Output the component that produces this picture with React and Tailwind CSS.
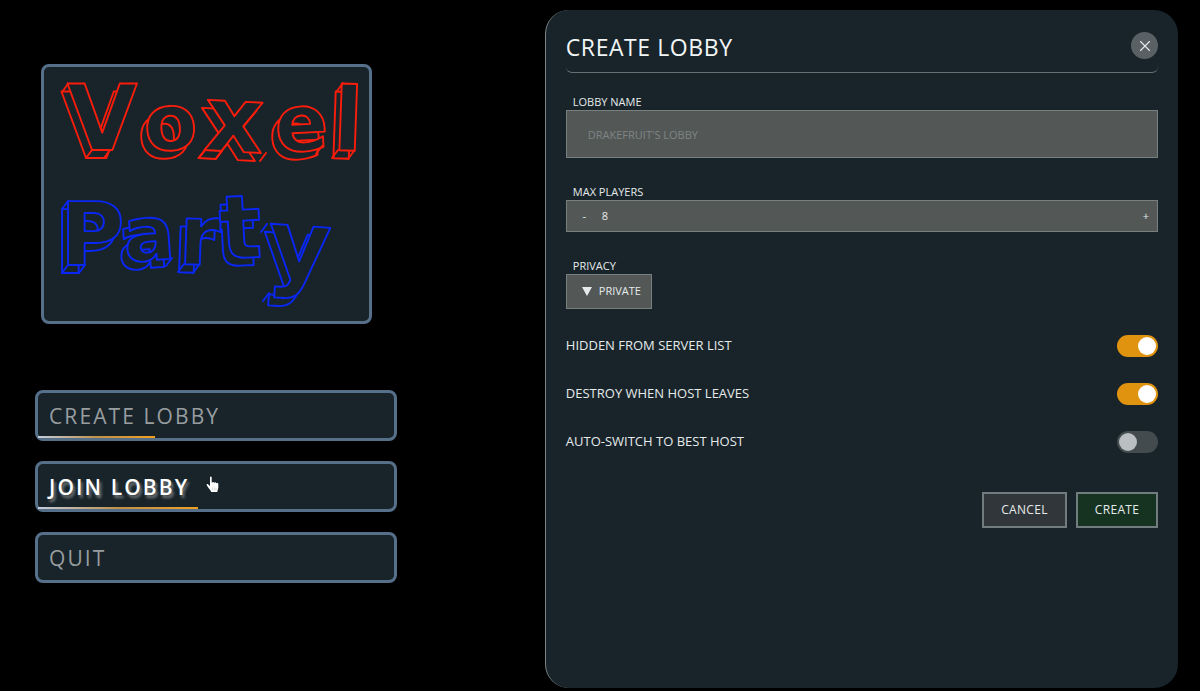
import { useState } from 'react';
import { FiX } from 'react-icons/fi';

const menuItems = [
  { label: 'CREATE LOBBY', progress: 33 },
  { label: 'JOIN LOBBY', progress: 45, active: true },
  { label: 'QUIT', progress: 0 },
];

const Logo = () => (
  <div className="w-[331px] rounded-lg border-[3px] border-[#56708a] bg-[#18242a]">
    <svg viewBox="44 67 325 254" className="block w-full" role="img" aria-label="Voxel Party">
      <g
        fontFamily="'DejaVu Sans', sans-serif"
        fontWeight="700"
        fill="#18242a"
        strokeWidth="1.9"
        strokeLinejoin="round"
        strokeLinecap="round"
      >
        <g stroke="#fb1d0c">
          <use href="#logo-top" x="-6" y="8" />
          <text id="logo-top">
            <tspan x="67" y="150" fontSize="91">V</tspan>
            <tspan x="145" y="151" fontSize="78" rotate="-3">o</tspan>
            <tspan x="203" y="150" fontSize="92" rotate="3">x</tspan>
            <tspan x="276" y="152" fontSize="79" rotate="-3">e</tspan>
            <tspan x="332" y="150" fontSize="88" rotate="2">l</tspan>
          </text>
          {/* edges that join the front face to the back one */}
          <path d="M68 84l-6 8M92 150l-6 8M110 150l-6 8M205 150l-6 8M222 151l-6 8M266 153l-6 8M322 146l-6 8M343 83l-6 8M338 150l-6 8M354 151l-6 8" />
        </g>
        <g stroke="#0a27f5">
          <use href="#logo-bottom" x="-6" y="8" />
          <text id="logo-bottom">
            <tspan x="60" y="265" fontSize="88">P</tspan>
            <tspan x="125" y="262" fontSize="76" rotate="-4">a</tspan>
            <tspan x="178" y="264" fontSize="84" rotate="2">r</tspan>
            <tspan x="221" y="259" fontSize="88" rotate="-3">t</tspan>
            <tspan x="266" y="276" fontSize="96" rotate="4">y</tspan>
          </text>
          <path d="M68 201l-6 8M68 265l-6 8M85 265l-6 8M172 258l-6 8M184 264l-6 8M199 265l-6 8M267 224l-6 8M269 293l-6 8" />
        </g>
      </g>
    </svg>
  </div>
);

const HandCursor = () => (
  <svg viewBox="0 0 13 18" className="absolute left-[168px] top-3 h-[18px] w-[13px]" aria-hidden="true">
    <path
      d="M4 1.4C4 .3 5.7.3 5.7 1.4v5l.5.1c.2-.9 1.7-.8 1.8.2l.4.1c.3-.8 1.7-.6 1.8.3l.4.1c.5-.6 1.7-.3 1.7.7v3.6c0 1.6-.8 2.4-1 4.6H5.2c-.3-1.7-1.8-3-3-4.7L.8 9.3c-.5-.9.6-1.7 1.4-.9L4 10z"
      fill="#fff"
    />
    <path d="M6.6 11.5v3M8.4 11.5v3M10 11.5v3" stroke="#a3abae" strokeWidth=".4" />
  </svg>
);

const MenuButton = ({ label, progress, active }) => (
  <button
    type="button"
    className={`relative flex h-[51px] w-full items-center rounded-lg border-[3px] border-[#56708a] bg-[#18242a] px-[11px] pt-[2px] text-left text-[21px] tracking-widest ${
      active
        ? 'font-semibold text-white [text-shadow:2px_3px_3px_#7a7d7f]'
        : 'font-medium text-[#989da0]'
    }`}
  >
    {label}
    {progress > 0 && (
      <span
        className="absolute bottom-0 left-0 h-[2px] bg-linear-to-r from-[#c3ccdc] via-[#c09147] to-[#f0a01c]"
        style={{ width: `${progress}%` }}
      />
    )}
    {active && <HandCursor />}
  </button>
);

const Toggle = ({ id, label, checked, onChange }) => (
  <div className="flex h-[22px] items-center justify-between">
    <label htmlFor={id} className="text-[13px]">{label}</label>
    <input
      id={id}
      type="checkbox"
      role="switch"
      checked={checked}
      onChange={onChange}
      className="h-[22px] w-[41px] appearance-none rounded-full bg-[#434b4e] p-[2px] before:block before:size-[18px] before:rounded-full before:bg-[#babfc1] checked:bg-[#e0930f] checked:before:ml-auto checked:before:bg-white"
    />
  </div>
);

const App = () => {
  const [name, setName] = useState('');
  const [players, setPlayers] = useState(8);
  const [privacy, setPrivacy] = useState('PRIVATE');
  const [options, setOptions] = useState({ hidden: true, destroy: true, autoSwitch: false });

  const toggle = (key) => setOptions({ ...options, [key]: !options[key] });

  return (
    <div className="flex min-h-screen bg-black font-['Open_Sans',sans-serif] text-[#e6eaeb]">
      <nav className="w-[45.4%] shrink-0 px-[35px] pt-16">
        <div className="pl-[6px]">
          <Logo />
        </div>
        <div className="mt-[66px] flex max-w-[362px] flex-col gap-5">
          {menuItems.map((item) => (
            <MenuButton key={item.label} {...item} />
          ))}
        </div>
      </nav>

      <main className="mt-[10px] mr-[22px] mb-[3px] flex-1 rounded-3xl border-l border-[#7d8586] bg-[#18242a] px-5 pt-5">
        <header className="flex h-[43px] items-start justify-between rounded-md border-b border-[#667073]">
          <h1 className="text-[23px] leading-[34px] tracking-wide text-[#f2f5f6]">CREATE LOBBY</h1>
          <button
            type="button"
            aria-label="Close"
            className="mt-[2px] flex size-[27px] items-center justify-center rounded-full bg-[#596164]"
          >
            <FiX size={18} strokeWidth={1.5} />
          </button>
        </header>

        <form className="mt-[21px] flex flex-col gap-[26px]" onSubmit={(e) => e.preventDefault()}>
          <div>
            <label htmlFor="lobby-name" className="block px-[7px] text-[11px] leading-4">LOBBY NAME</label>
            <input
              id="lobby-name"
              type="text"
              value={name}
              onChange={(e) => setName(e.target.value)}
              placeholder="DRAKEFRUIT'S LOBBY"
              className="block h-12 w-full border border-[#78807f] bg-[#535857] px-[21px] text-[11px] placeholder:text-[#7f8484]"
            />
          </div>

          <div>
            <label htmlFor="max-players" className="block px-[7px] text-[11px] leading-4">MAX PLAYERS</label>
            <div className="flex h-8 items-center border border-[#78807f] bg-[#535857] text-[11px]">
              <button type="button" className="w-[35px]" onClick={() => setPlayers(players - 1)}>-</button>
              <input
                id="max-players"
                type="text"
                value={players}
                onChange={(e) => setPlayers(Number(e.target.value) || 0)}
                className="min-w-0 flex-1"
              />
              <button type="button" className="w-[22px]" onClick={() => setPlayers(players + 1)}>+</button>
            </div>
          </div>

          <div>
            <label htmlFor="privacy" className="block px-[7px] text-[11px] leading-4">PRIVACY</label>
            <div className="relative w-[86px]">
              <select
                id="privacy"
                value={privacy}
                onChange={(e) => setPrivacy(e.target.value)}
                className="block h-[35px] w-full appearance-none border border-[#78807f] bg-[#535857] pl-8 text-[11px]"
              >
                <option>PRIVATE</option>
                <option>PUBLIC</option>
              </select>
              <svg viewBox="0 0 10 9" className="pointer-events-none absolute left-4 top-[13px] h-[9px] w-[10px]" aria-hidden="true">
                <path d="M0 0h10L5 9z" fill="#e6eaeb" />
              </svg>
            </div>
          </div>

          <Toggle id="hidden" label="HIDDEN FROM SERVER LIST" checked={options.hidden} onChange={() => toggle('hidden')} />
          <Toggle id="destroy" label="DESTROY WHEN HOST LEAVES" checked={options.destroy} onChange={() => toggle('destroy')} />
          <Toggle id="auto-switch" label="AUTO-SWITCH TO BEST HOST" checked={options.autoSwitch} onChange={() => toggle('autoSwitch')} />

          <div className="mt-[13px] flex justify-end gap-[9px] text-xs tracking-wide">
            <button type="button" className="h-9 w-[85px] border-2 border-[#727b7e] bg-[#30363a]">CANCEL</button>
            <button type="submit" className="h-9 w-[82px] border-2 border-[#727b7e] bg-[#163322]">CREATE</button>
          </div>
        </form>
      </main>
    </div>
  );
};

export default App;
